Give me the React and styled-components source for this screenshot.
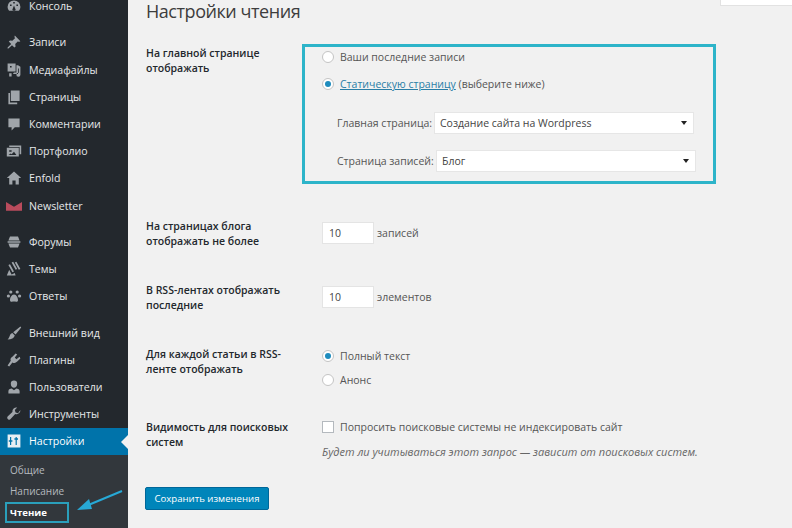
import styled, { createGlobalStyle } from 'styled-components';

const GlobalStyle = createGlobalStyle`
    html, body {
        margin: 0;
        padding: 0;
        background: #f1f1f1;
    }
    * {
        box-sizing: border-box;
    }
`;

const Page = styled.div`
    width: 792px;
    height: 528px;
    display: flex;
    position: relative;
    overflow: hidden;
    background: #f1f1f1;
    color: #444;
    font-family: 'Open Sans', 'Noto Sans', sans-serif;
    font-size: 10.5px;
`;

const Sidebar = styled.nav`
    width: 128px;
    height: 528px;
    flex-shrink: 0;
    background: #23282d;
    display: flex;
    flex-direction: column;
    overflow: hidden;
`;

const MenuGroup = styled.div`
    display: flex;
    flex-direction: column;
    margin-bottom: 9.2px;
    &:first-child {
        margin-top: -8px;
        margin-bottom: 9.6px;
    }
`;

const MenuItem = styled.div`
    height: 27.2px;
    padding-left: 6px;
    display: flex;
    align-items: center;
    gap: 7px;
    position: relative;
    line-height: 10px;
    color: ${(props) => (props.$active ? '#fff' : '#e6e8ea')};
    background: ${(props) => (props.$active ? '#0073aa' : 'transparent')};
    font-size: 10.6px;
    svg {
        width: 16px;
        height: 16px;
        flex-shrink: 0;
        fill: ${(props) => (props.$active ? '#e8eef2' : '#a0a5aa')};
    }
    ${(props) =>
        props.$active &&
        `&::after {
            content: '';
            position: absolute;
            right: 0;
            top: 7px;
            border: 7px solid transparent;
            border-left: 0;
            border-right-color: #f1f1f1;
        }`}
`;

const SubMenu = styled.div`
    flex: 1;
    margin-top: -9.2px;
    background: #32373c;
    padding-top: 4px;
    display: flex;
    flex-direction: column;
`;

const SubItem = styled.div`
    height: 21.5px;
    padding-left: 10px;
    display: flex;
    align-items: center;
    font-size: ${(props) => (props.$current ? '9.6px' : '10px')};
    font-weight: ${(props) => (props.$current ? 700 : 400)};
    color: ${(props) => (props.$current ? '#fff' : '#b4b9be')};
`;

const CurrentMark = styled.div`
    position: absolute;
    left: 5px;
    top: 502px;
    width: 64px;
    height: 21px;
    border: 2.5px solid #2a9fbb;
`;

const CalloutArrow = styled.svg`
    position: absolute;
    left: 72px;
    top: 486px;
    width: 54px;
    height: 30px;
`;

const Main = styled.main`
    flex: 1;
    padding-left: 18px;
    position: relative;
    display: flex;
    flex-direction: column;
`;

const SearchStub = styled.div`
    position: absolute;
    right: 0;
    top: 0;
    width: 72px;
    height: 6px;
    background: #fff;
    border-left: 1px solid #e2e2e2;
    border-bottom: 1px solid #e2e2e2;
`;

const Title = styled.h1`
    margin: 1px 0 0;
    height: 43px;
    font-size: 18px;
    font-weight: 400;
    line-height: 20px;
    letter-spacing: -0.45px;
    color: #3d3d3d;
`;

const Form = styled.div`
    display: flex;
    flex-direction: column;
    gap: 33px;
`;

const Row = styled.section`
    display: grid;
    grid-template-columns: 156px 1fr;
`;

const Label = styled.div`
    width: 150px;
    padding-top: ${(props) => (props.$top ? '2px' : '1px')};
    font-size: 10.5px;
    font-weight: 600;
    line-height: 15px;
    color: #23282d;
`;

const Highlight = styled.div`
    width: 414px;
    height: 140px;
    margin-bottom: 1px;
    border: 3px solid #2db4c9;
    padding-left: 17px;
    display: flex;
    flex-direction: column;
`;

const Value = styled.div`
    padding-left: 20px;
    display: flex;
    flex-direction: column;
    margin: ${(props) => props.$margin || '0'};
`;

const OptionLine = styled.div`
    height: ${(props) => props.$height}px;
    display: flex;
    align-items: center;
    gap: 6px;
    font-size: 10.5px;
    color: #555;
    white-space: nowrap;
`;

const Radio = styled.span`
    width: 12px;
    height: 12px;
    flex-shrink: 0;
    border-radius: 50%;
    background: #fff;
    border: 1px solid #c4c4c4;
    display: flex;
    align-items: center;
    justify-content: center;
    &::after {
        content: '';
        width: 6px;
        height: 6px;
        border-radius: 50%;
        background: ${(props) => (props.$checked ? '#1e8cbe' : 'transparent')};
    }
`;

const Checkbox = styled.span`
    width: 12px;
    height: 12px;
    flex-shrink: 0;
    background: #fff;
    border: 1px solid #b4b9be;
`;

const StaticLink = styled.span`
    color: #2a7ea6;
    text-decoration: underline;
`;

const SelectRow = styled.div`
    display: flex;
    align-items: center;
    margin-left: 15px;
    margin-top: ${(props) => props.$top}px;
    gap: 3px;
    font-size: 10.5px;
    color: #555;
    white-space: nowrap;
`;

const SelectLabel = styled.span`
    width: ${(props) => props.$width}px;
`;

const Select = styled.div`
    width: 260px;
    height: 22px;
    padding: 0 6px 0 5px;
    background: #fff;
    border: 1px solid #e6e6e6;
    display: flex;
    align-items: center;
    justify-content: space-between;
    color: #444;
    &::after {
        content: '';
        border-style: solid;
        border-width: 4px 3px 0;
        border-color: #222 transparent transparent;
    }
`;

const NumberLine = styled.div`
    display: flex;
    align-items: center;
    gap: 3px;
    margin-top: 4px;
    font-size: 10.5px;
    color: #555;
`;

const NumberInput = styled.div`
    width: 52px;
    height: 22px;
    padding-left: 6px;
    background: #fff;
    border: 1px solid #e4e4e4;
    display: flex;
    align-items: center;
    color: #444;
`;

const Hint = styled.p`
    margin: 10px 0 0;
    font-size: 11px;
    font-style: italic;
    color: #666;
    white-space: nowrap;
`;

const SaveButton = styled.button`
    width: 124px;
    height: 23px;
    margin: 28px 0 0 -1px;
    padding: 0;
    background: #0085ba;
    border: 1px solid #006799;
    border-radius: 2px;
    color: #fff;
    font-family: inherit;
    font-size: 9.6px;
`;

const icons = {
    dashboard: 'M10 3a8 8 0 0 0-8 8c0 2 .8 3.900 2 5h12c1.200-1.100 2-3 2-5a8 8 0 0 0-8-8zM9 5h2v2H9zM5 8h2v2H5zm8 0h2v2h-2zm-3 1.500 1.500 3.500a2 2 0 1 1-3 0z',
    pin: 'M11 2l7 7-2 1-1-1-3.500 3.500.5 3-1.500 1.500-3-3L3 18l-1 0 0-1 4.500-4.500-3-3L5 8l3 .5L11.500 5l-1-1z',
    media: 'M2 2h10v10H2zm3 3v2h2V5zM9 14l1-1h3V4h2l3 2v10a2.500 2.500 0 1 1-2-2.400V8h-1v7H9zM4 14h3v4H4z',
    pages: 'M6 2h11v13H6zM3 5h2v12h9v2H3z',
    comment: 'M3 3h14v11h-6l-4 4v-4H3z',
    portfolio: 'M4 3h15v11h-2V5H4zM1 6h15v11H1zm3 3v2h3V9zm-1 6h10l-3-4-3 3-1-1z',
    home: 'M10 2l9 8h-3v8h-4v-5H8v5H4v-8H1z',
    forum: 'M2 9h16v2H2zM5 3h10l2 5H3zM3 12h14l-2 5H5z',
    themes: 'M7 2l2-1 5 9-2 1zM11 2l2-1 5 9-2 1zM3 5l2-1 5 9-2 1zM1 18l3-7 3 6 4-2 1 3z',
    paws: 'M4 5a2 2 0 1 1 4 0 2 2 0 0 1-4 0zm8 0a2 2 0 1 1 4 0 2 2 0 0 1-4 0zM1 10a2 2 0 1 1 4 0 2 2 0 0 1-4 0zm14 0a2 2 0 1 1 4 0 2 2 0 0 1-4 0zM10 8c3 0 5 4 5 7 0 3-3 2-5 2s-5 1-5-2c0-3 2-7 5-7z',
    brush: 'M18 2l1 1-7 9-3-3zM8 10l3 3c-1 3-4 5-9 5 3-2 2-7 6-8z',
    plugin: 'M12 2l2 1-3 4 2 2 4-3 1 2-4 4c-2 2-4 2-6 1l-4 5-2-1 4-6c-1-2 0-4 2-5z',
    user: 'M10 2a4 4 0 0 1 4 4c0 3-2 5-4 5S6 9 6 6a4 4 0 0 1 4-4zM3 18v-3c0-2 3-3 4-3l3 2 3-2c1 0 4 1 4 3v3z',
    wrench: 'M18 5a5 5 0 0 1-6.500 5L6 16a2.500 2.500 0 0 1-4-3l6-5.500A5 5 0 0 1 14 2l-3 3 1 3 3 1z',
    settings: 'M2 2h16v16H2zm3 3v4H3.500v2H5v4h1.500v-4H8V9H6.500V5zm7 0v1.500h-1.500v2H12V15h1.500V8.500H15v-2h-1.500V5z',
};

const Icon = ({ name }) => (
    <svg viewBox="0 0 20 20">
        <path d={icons[name]} fillRule="evenodd" />
    </svg>
);

const MailIcon = () => (
    <svg viewBox="0 0 20 20" style={{ fill: '#b94b5c' }}>
        <path d="M0 5l10 6 10-6v11H0z" />
    </svg>
);

const menuGroups = [
    [['dashboard', 'Консоль']],
    [
        ['pin', 'Записи'],
        ['media', 'Медиафайлы'],
        ['pages', 'Страницы'],
        ['comment', 'Комментарии'],
        ['portfolio', 'Портфолио'],
        ['home', 'Enfold'],
        ['mail', 'Newsletter'],
    ],
    [
        ['forum', 'Форумы'],
        ['themes', 'Темы'],
        ['paws', 'Ответы'],
    ],
    [
        ['brush', 'Внешний вид'],
        ['plugin', 'Плагины'],
        ['user', 'Пользователи'],
        ['wrench', 'Инструменты'],
        ['settings', 'Настройки'],
    ],
];

const App = () => {
    return (
        <Page>
            <GlobalStyle />
            <Sidebar>
                {menuGroups.map((group) => (
                    <MenuGroup key={group[0][1]}>
                        {group.map(([icon, text]) => (
                            <MenuItem key={text} $active={text === 'Настройки'}>
                                {icon === 'mail' ? <MailIcon /> : <Icon name={icon} />}
                                {text}
                            </MenuItem>
                        ))}
                    </MenuGroup>
                ))}
                <SubMenu>
                    <SubItem>Общие</SubItem>
                    <SubItem>Написание</SubItem>
                    <SubItem $current>Чтение</SubItem>
                </SubMenu>
            </Sidebar>
            <CurrentMark />
            <CalloutArrow viewBox="0 0 54 30">
                <path d="M50 5 L14 20" stroke="#27a9d6" strokeWidth="2" fill="none" />
                <path d="M5 24 L17 13 L20 23 Z" fill="#27a9d6" />
            </CalloutArrow>
            <Main>
                <SearchStub />
                <Title>Настройки чтения</Title>
                <Form>
                    <Row>
                        <Label $top>На главной странице отображать</Label>
                        <Highlight>
                            <OptionLine $height={20}>
                                <Radio />
                                Ваши последние записи
                            </OptionLine>
                            <OptionLine $height={34}>
                                <Radio $checked />
                                <span>
                                    <StaticLink>Статическую страницу</StaticLink> (выберите ниже)
                                </span>
                            </OptionLine>
                            <SelectRow $top={11}>
                                <SelectLabel $width={94}>Главная страница:</SelectLabel>
                                <Select>Создание сайта на Wordpress</Select>
                            </SelectRow>
                            <SelectRow $top={16}>
                                <SelectLabel $width={96}>Страница записей:</SelectLabel>
                                <Select>Блог</Select>
                            </SelectRow>
                        </Highlight>
                    </Row>
                    <Row>
                        <Label>На страницах блога отображать не более</Label>
                        <Value>
                            <NumberLine>
                                <NumberInput>10</NumberInput>
                                записей
                            </NumberLine>
                        </Value>
                    </Row>
                    <Row>
                        <Label>В RSS-лентах отображать последние</Label>
                        <Value>
                            <NumberLine>
                                <NumberInput>10</NumberInput>
                                элементов
                            </NumberLine>
                        </Value>
                    </Row>
                    <Row>
                        <Label>Для каждой статьи в RSS-ленте отображать</Label>
                        <Value $margin="-2px 0 -6px">
                            <OptionLine $height={24}>
                                <Radio $checked />
                                Полный текст
                            </OptionLine>
                            <OptionLine $height={24}>
                                <Radio />
                                Анонс
                            </OptionLine>
                        </Value>
                    </Row>
                    <Row>
                        <Label>Видимость для поисковых систем</Label>
                        <Value>
                            <OptionLine $height={15}>
                                <Checkbox />
                                Попросить поисковые системы не индексировать сайт
                            </OptionLine>
                            <Hint>Будет ли учитываться этот запрос — зависит от поисковых систем.</Hint>
                        </Value>
                    </Row>
                </Form>
                <SaveButton>Сохранить изменения</SaveButton>
            </Main>
        </Page>
    );
};

export default App;
